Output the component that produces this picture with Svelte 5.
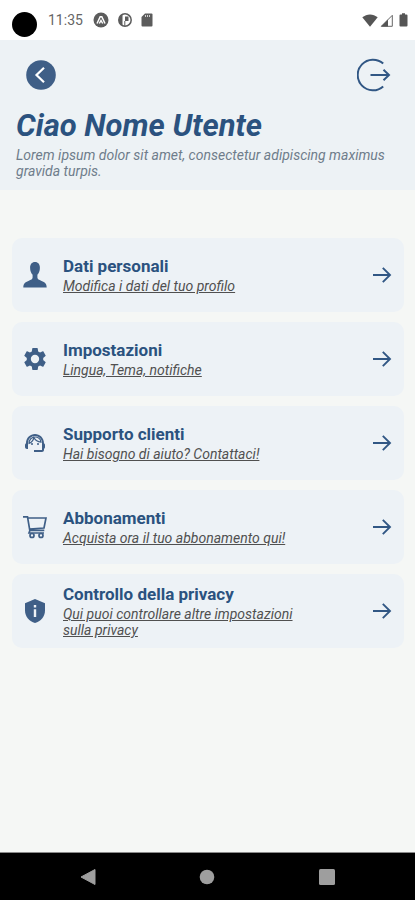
<script>
  const items = [
    { icon: 'user', title: 'Dati personali', text: 'Modifica i dati del tuo profilo' },
    { icon: 'gear', title: 'Impostazioni', text: 'Lingua, Tema, notifiche' },
    { icon: 'support', title: 'Supporto clienti', text: 'Hai bisogno di aiuto? Contattaci!' },
    { icon: 'cart', title: 'Abbonamenti', text: 'Acquista ora il tuo abbonamento qui!' },
    { icon: 'shield', title: 'Controllo della privacy', text: 'Qui puoi controllare altre impostazioni sulla privacy' }
  ];
</script>

<div class="screen">
  <div class="status">
    <span class="camera"></span>
    <span class="time">11:35</span>
    <div class="notices">
      <svg width="16" height="16" viewBox="0 0 16 16"><circle cx="8" cy="8" r="7.5" fill="#5c5c5c" /><path d="M4 11.500 7.200 4.800h1.600l3.200 6.700M6.300 11.500 8 8.500l1.700 3" fill="none" stroke="#fff" stroke-width="1.500" /></svg>
      <svg width="14" height="14" viewBox="0 0 14 14"><circle cx="7" cy="7" r="6.200" fill="#fff" stroke="#5c5c5c" stroke-width="1.500" /><path d="M3.500 2 4.500 1v12L2 11C0 8 .5 4.500 3.500 2zM7 3.500h3.500V8H7z" fill="#5c5c5c" /><path d="M6.800 8v5" stroke="#5c5c5c" stroke-width="1" /></svg>
      <svg width="12" height="14" viewBox="0 0 12 14"><path d="M4 .5h6.500a1 1 0 0 1 1 1v11a1 1 0 0 1-1 1h-9a1 1 0 0 1-1-1V4z" fill="#5c5c5c" /><path d="M4.500 2v2M6.500 2v2M8.500 2v2" stroke="#ddd" stroke-width=".9" /></svg>
    </div>
    <div class="signals">
      <svg width="16" height="13" viewBox="0 0 16 13"><path d="M.3 3.300C4.800-.6 11.200-.6 15.700 3.300L8 12.800z" fill="#555" /></svg>
      <svg width="13" height="13" viewBox="0 0 13 13"><path d="M1.300 12.300 12.300 1.300v11z" fill="#fff" stroke="#666" /><path d="M1 12.500 8 5.500v7z" fill="#555" /></svg>
      <svg class="battery" width="9" height="14" viewBox="0 0 9 14"><path d="M3 .3h3v1.200h1.500a1 1 0 0 1 1 1v10a1 1 0 0 1-1 1h-6a1 1 0 0 1-1-1v-10a1 1 0 0 1 1-1H3z" fill="#555" /></svg>
    </div>
  </div>

  <header>
    <div class="actions">
      <button aria-label="Indietro">
        <svg width="30" height="30" viewBox="0 0 30 30"><circle cx="15" cy="15" r="14.800" fill="#3f5f87" /><path d="M18 7.800 10.500 15l7.500 7.200" fill="none" stroke="#fff" stroke-width="2.200" /></svg>
      </button>
      <button aria-label="Esci">
        <svg width="34" height="34" viewBox="0 0 34 34"><path d="M26.200 5.600A15.300 15.300 0 1 0 26.200 28.400M13.500 17H32M26.500 11.700 32 17l-5.500 5.300" fill="none" stroke="#315784" stroke-width="2" /></svg>
      </button>
    </div>
    <h1>Ciao Nome Utente</h1>
    <p>Lorem ipsum dolor sit amet, consectetur adipiscing maximus gravida turpis.</p>
  </header>

  <main>
    {#each items as item}
      <a class="card" href="#{item.icon}">
        <svg class="icon" width="24" height="26" viewBox="0 0 24 26">
          {#if item.icon === 'user'}
            <path d="M12 0c3.200 0 4.900 2.300 4.900 5.800 0 3-1 5.400-2.500 7v2.800c0 1.600 1.400 2.300 4.200 3.300 3.200 1.200 5.100 2.300 5.100 6.700H.3c0-4.400 1.900-5.500 5.100-6.700 2.800-1 4.200-1.700 4.200-3.300v-2.800c-1.500-1.600-2.500-4-2.500-7C7.100 2.300 8.800 0 12 0z" fill="#3f5f87" />
          {:else if item.icon === 'gear'}
            <path fill-rule="evenodd" transform="translate(-1.200 -.2) scale(1.100)" d="M19.430 12.980c.04-.32.07-.64.07-.98s-.03-.66-.07-.98l2.110-1.650c.19-.15.240-.42.120-.64l-2-3.460c-.12-.22-.39-.3-.61-.22l-2.490 1c-.52-.4-1.080-.73-1.690-.98l-.38-2.650C14.460 2.180 14.250 2 14 2h-4c-.25 0-.46.180-.49.420l-.38 2.650c-.61.250-1.170.590-1.690.980l-2.490-1c-.23-.09-.49 0-.61.220l-2 3.460c-.13.220-.07.490.120.640l2.110 1.650c-.04.320-.07.650-.07.980s.03.660.07.980l-2.110 1.650c-.19.150-.24.420-.12.640l2 3.460c.12.220.390.300.610.220l2.490-1c.52.400 1.080.730 1.690.980l.38 2.650c.03.240.240.420.490.420h4c.25 0 .46-.18.490-.42l.38-2.650c.61-.25 1.170-.59 1.690-.98l2.490 1c.23.090.490 0 .610-.22l2-3.460c.12-.22.070-.49-.12-.64zM12 15.800a3.800 3.800 0 1 1 0-7.600 3.800 3.800 0 0 1 0 7.600z" fill="#3f5f87" />
          {:else if item.icon === 'support'}
            <path transform="translate(0 1)" d="M21 12.220C21 6.730 16.740 3 12 3c-4.690 0-9 3.650-9 9.280-.6.340-1 .980-1 1.720v2c0 1.100.9 2 2 2h1v-6.100c0-3.870 3.130-7 7-7s7 3.130 7 7V19h-8v2h8c1.100 0 2-.9 2-2v-1.220c.590-.310 1-.920 1-1.640v-2.300c0-.7-.410-1.310-1-1.620z" fill="#3f5f87" /><g transform="translate(0 1)" fill="#3f5f87"><circle cx="9" cy="13" r="1" /><circle cx="15" cy="13" r="1" /><path d="M18 11.030A6.040 6.040 0 0 0 12.050 6c-3.030 0-6.290 2.510-6.030 6.450a8.075 8.075 0 0 0 4.860-5.890c1.310 2.630 4 4.440 7.120 4.470z" fill="none" stroke="#3f5f87" stroke-width="1.200" /></g>
          {:else if item.icon === 'cart'}
            <g fill="none" stroke="#3f5f87" stroke-width="1.700"><path d="M0 2.800h4.500l2.300 13.500h14.500M5 4h18l-2 10-14.500 1M7 16.300 6 19h15" /><circle cx="9" cy="21.500" r="2" /><circle cx="18" cy="21.500" r="2" /></g>
          {:else}
            <path d="M12 1 22 5.200v7.300c0 6.300-4.300 10.800-10 12.500C6.300 23.300 2 18.800 2 12.500V5.200z" fill="#3f5f87" /><path d="M12 7v2.600M12 11.300V19" stroke="#edf2f6" stroke-width="2.400" />
          {/if}
        </svg>
        <span class="copy">
          <span class="title">{item.title}</span>
          <span class="text">{item.text}</span>
        </span>
        <svg width="20" height="18" viewBox="0 0 20 18"><path d="M1 9h17M10.800 1.800 18 9l-7.200 7.200" fill="none" stroke="#315784" stroke-width="1.900" /></svg>
      </a>
    {/each}
  </main>

  <nav>
    <button aria-label="Indietro"><svg width="18" height="18" viewBox="0 0 18 18"><path d="M16 1.500v15L2 9z" fill="#9e9e9e" stroke="#9e9e9e" stroke-linejoin="round" /></svg></button>
    <button aria-label="Home"><svg width="16" height="16" viewBox="0 0 16 16"><circle cx="8" cy="8" r="7.300" fill="#9e9e9e" /></svg></button>
    <button aria-label="Recenti"><svg width="18" height="18" viewBox="0 0 18 18"><rect x="1" y="1" width="16" height="16" rx="1.500" fill="#9e9e9e" /></svg></button>
  </nav>
</div>

<style>
  :global(body) { margin: 0; }
  .screen {
    min-height: 100vh;
    display: flex;
    flex-direction: column;
    background: #f5f7f5;
    font-family: Roboto, "Liberation Sans", sans-serif;
  }
  svg { display: block; flex: none; }
  button { padding: 0; border: 0; background: none; }
  .status {
    box-sizing: border-box;
    height: 40px;
    display: flex;
    align-items: center;
    padding: 0 7px 0 12px;
    background: #fff;
  }
  .camera { width: 25px; height: 25px; margin-top: 8px; border-radius: 50%; background: #000; }
  .time { margin-left: 11px; font-size: 14px; line-height: 16px; color: #666; }
  .notices { display: flex; align-items: center; gap: 9px; margin-left: 10px; }
  .signals { display: flex; align-items: center; gap: 2px; margin-left: auto; }
  .battery { margin-left: 4px; }
  header { padding: 18px 16px 11px; background: #edf2f5; }
  .actions { display: flex; justify-content: space-between; align-items: center; padding: 0 8px 0 10px; }
  h1 { margin: 16px 0 3px; font-size: 31px; line-height: 36px; font-weight: 700; font-style: italic; color: #2b527f; }
  p { margin: 0; font-size: 14px; line-height: 16px; font-style: italic; color: #6f7d8b; }
  main { flex: 1; display: flex; flex-direction: column; gap: 10px; padding: 48px 11px 24px 12px; }
  .card {
    box-sizing: border-box;
    min-height: 74px;
    display: flex;
    align-items: center;
    padding: 8px 12px 8px 11px;
    border-radius: 10px;
    background: #edf2f6;
    text-decoration: none;
  }
  .copy { flex: 1; display: flex; flex-direction: column; gap: 1px; padding: 0 64px 0 16px; }
  .title { font-size: 17px; line-height: 21px; font-weight: 700; color: #2b527f; }
  .text { font-size: 14px; line-height: 16px; font-style: italic; color: #505050; text-decoration: underline; }
  nav {
    height: 47px;
    display: flex;
    justify-content: space-around;
    align-items: center;
    padding: 0 28px;
    border-top: 1px solid #8a8a8a;
    background: #000;
  }
</style>
